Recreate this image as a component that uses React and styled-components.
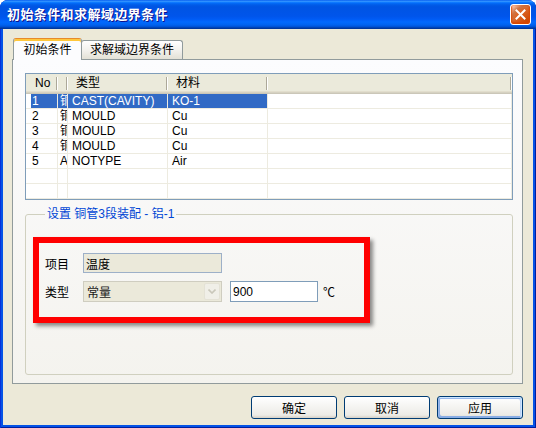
import React from 'react';
import styled, { createGlobalStyle, css } from 'styled-components';

const uiFont = `"Liberation Sans", "Noto Sans CJK SC", sans-serif`;

const GlobalStyle = createGlobalStyle`
	html, body {
		margin: 0;
		padding: 0;
	}
	body {
		width: 536px;
		height: 428px;
		overflow: hidden;
		font-family: ${uiFont};
		font-size: 12px;
		color: #000;
	}
`;

const Window = styled.div`
	width: 536px;
	height: 428px;
	box-sizing: border-box;
	display: flex;
	flex-direction: column;
	background: #0553e6;
	border-radius: 8px 8px 0 0;
	overflow: hidden;
	box-shadow: inset 1px 0 #0831d9, inset -1px -1px #001ea0;
`;

const TitleBar = styled.div`
	height: 29px;
	flex: none;
	display: flex;
	align-items: center;
	justify-content: space-between;
	padding: 0 5px 0 7px;
	background: linear-gradient(
		to bottom,
		#0058ee 0%,
		#3593ff 4%,
		#288eff 6%,
		#127dff 8%,
		#036ffc 10%,
		#0262ee 14%,
		#0057e5 20%,
		#0054e3 24%,
		#0055eb 56%,
		#005bf5 66%,
		#026afe 76%,
		#0062ef 86%,
		#0052d6 92%,
		#0040ab 96%,
		#003092 100%
	);
	& > h1 {
		margin: 0;
		font-size: 13px;
		font-weight: 700;
		letter-spacing: 0.4px;
		color: #fff;
		text-shadow: 1px 1px #0f1089;
		line-height: 16px;
		padding-top: 1px;
	}
`;

const CloseButton = styled.div`
	width: 21px;
	height: 21px;
	box-sizing: border-box;
	border: 1px solid #fff;
	border-radius: 3px;
	display: flex;
	align-items: center;
	justify-content: center;
	background: radial-gradient(circle at 90% 90%, #cc4600 0%, #dc6527 55%, #cd7546 70%, #ffccb2 90%, #fff 100%);
	box-shadow: inset 0 -1px 2px 1px #da4600;
`;

const Body = styled.div`
	flex: 1;
	margin: 0 3px 3px;
	background: #ece9d8;
	padding: 9px 10px 6px 9px;
	display: flex;
	flex-direction: column;
`;

const TabStrip = styled.div`
	height: 21px;
	flex: none;
	display: flex;
	align-items: flex-end;
	padding-left: 1px;
	position: relative;
	z-index: 1;
`;

const Tab = styled.div`
	box-sizing: border-box;
	width: ${p => p.$width}px;
	border: 1px solid #919b9c;
	border-bottom: none;
	border-radius: 3px 3px 0 0;
	text-align: center;
	font-size: 12px;
	${p =>
		p.$active
			? css`
					height: 22px;
					margin-bottom: -1px;
					background: #fcfcfe;
					border-top: 1px solid #e68b2c;
					box-shadow: inset 0 2px #ffc73c;
					line-height: 21px;
					padding-top: 1px;
			  `
			: css`
					height: 19px;
					margin-left: -1px;
					background: linear-gradient(to bottom, #fff 0%, #f3f2ee 50%, #e3e1d6 100%);
					line-height: 19px;
			  `}
`;

const TabPanel = styled.div`
	height: 325px;
	flex: none;
	box-sizing: border-box;
	border: 1px solid #919b9c;
	background: linear-gradient(to bottom, #fcfcfe 0%, #f4f3ee 100%);
	padding: 13px 9px 8px 12px;
	display: flex;
	flex-direction: column;
`;

const gridColumns = '32px 10px 100px 100px 1fr';

const ListView = styled.div`
	height: 127px;
	flex: none;
	box-sizing: border-box;
	border: 1px solid #7f9db9;
	background: #fff;
	overflow: hidden;
`;

const HeaderRow = styled.div`
	display: grid;
	grid-template-columns: ${gridColumns};
	height: 20px;
	background: #ebeadb;
	box-shadow: inset 0 -1px #cbc7b8, inset 0 -2px #d6d2c2, inset 0 -3px #e2decd;
`;

const HeaderCell = styled.div`
	line-height: 18px;
	padding-left: ${p => p.$pad}px;
	white-space: nowrap;
	overflow: hidden;
	background:
		linear-gradient(#aca899, #aca899) right 1px top 3px / 1px 13px no-repeat,
		linear-gradient(#fff, #fff) right 0 top 3px / 1px 13px no-repeat;
`;

const Row = styled.div`
	display: grid;
	grid-template-columns: ${gridColumns};
	height: 15px;
`;

const Cell = styled.div`
	box-sizing: border-box;
	height: 15px;
	line-height: 15px;
	padding-left: ${p => p.$pad}px;
	border-right: 1px solid #edebe0;
	border-bottom: 1px solid #edebe0;
	white-space: nowrap;
	overflow: hidden;
	${p =>
		p.$selected &&
		css`
			color: #fff;
			background: ${p.$inset ? `linear-gradient(to right, transparent ${p.$inset}px, #316ac5 ${p.$inset}px)` : '#316ac5'};
		`}
`;

const GroupBox = styled.fieldset`
	flex: 1;
	margin: 7px 0 0;
	min-width: 0;
	border: 1px solid #d0d0bf;
	border-radius: 3px;
	padding: 32px 0 0 19px;
	& > legend {
		color: #0046d5;
		font-size: 12px;
		line-height: 14px;
		padding: 0 2px;
		margin-left: 0;
	}
`;

const FieldArea = styled.div`
	position: relative;
	display: flex;
	flex-direction: column;
	gap: 8px;
`;

const FieldRow = styled.div`
	display: flex;
	align-items: center;
	height: ${p => p.$height}px;
`;

const FieldLabel = styled.span`
	width: 38px;
	flex: none;
`;

const TextBox = styled.input`
	box-sizing: border-box;
	width: ${p => p.$width}px;
	height: ${p => p.$height}px;
	margin: 0 0 0 ${p => p.$gap || 0}px;
	padding: 0 2px;
	border: 1px solid ${p => (p.$readOnlyLook ? '#9db0c8' : '#7f9db9')};
	background: ${p => (p.$readOnlyLook ? '#ebe9da' : '#fff')};
	font: 12px ${uiFont};
	color: #000;
	outline: none;
`;

const ComboBox = styled.div`
	box-sizing: border-box;
	width: 139px;
	height: 21px;
	border: 1px solid #cfcdc0;
	background: #ebe9da;
	display: flex;
	align-items: center;
	padding: 1px;
	& > span {
		flex: 1;
		padding-left: 2px;
		color: #1a1a1a;
	}
`;

const DropButton = styled.div`
	width: 16px;
	height: 17px;
	box-sizing: border-box;
	border: 1px solid #e4e2d6;
	border-radius: 2px;
	background: #f0efe8;
	display: flex;
	align-items: center;
	justify-content: center;
`;

const Unit = styled.span`
	margin-left: 5px;
	font-family: "Noto Sans CJK SC", sans-serif;
	font-size: 12px;
`;

const Highlight = styled.div`
	position: absolute;
	left: -12px;
	top: -16px;
	width: 337px;
	height: 86px;
	box-sizing: border-box;
	border: 6px solid #ff0000;
	box-shadow: 3px 3px 4px rgba(0, 0, 0, 0.45);
	pointer-events: none;
`;

const ButtonRow = styled.div`
	margin-top: 12px;
	height: 23px;
	flex: none;
	display: flex;
	justify-content: flex-end;
	gap: 7px;
`;

const Button = styled.button`
	width: 86px;
	height: 23px;
	box-sizing: border-box;
	padding: 0;
	border: 1px solid #003c74;
	border-radius: 3px;
	background: linear-gradient(180deg, #fff 0%, #ecebe6 86%, #d6d0c5 100%);
	font: 12px ${uiFont};
	color: #000;
	${p =>
		p.$default &&
		css`
			box-shadow: inset -1px 1px #cee7ff, inset 1px 2px #98b8ea, inset -2px 2px #bcd4f6, inset 1px -1px #89ade4,
				inset 2px -2px #89ade4;
		`}
`;

const rows = [
	{ no: '1', name: '铜管3段装配', type: 'CAST(CAVITY)', material: 'KO-1', selected: true },
	{ no: '2', name: '铜管3段装配', type: 'MOULD', material: 'Cu' },
	{ no: '3', name: '铜管3段装配', type: 'MOULD', material: 'Cu' },
	{ no: '4', name: '铜管3段装配', type: 'MOULD', material: 'Cu' },
	{ no: '5', name: 'Air', type: 'NOTYPE', material: 'Air' },
	{ no: '', name: '', type: '', material: '' },
	{ no: '', name: '', type: '', material: '' },
];

const App = () => {
	return (
		<>
			<GlobalStyle />
			<Window>
				<TitleBar>
					<h1>初始条件和求解域边界条件</h1>
					<CloseButton>
						<svg width="11" height="11" viewBox="0 0 11 11">
							<path d="M1.5 1.5 L9.5 9.5 M9.5 1.5 L1.5 9.5" stroke="#fff" strokeWidth="2" strokeLinecap="square" />
						</svg>
					</CloseButton>
				</TitleBar>
				<Body>
					<TabStrip>
						<Tab $active $width={69}>
							初始条件
						</Tab>
						<Tab $width={102}>求解域边界条件</Tab>
					</TabStrip>
					<TabPanel>
						<ListView>
							<HeaderRow>
								<HeaderCell $pad={9}>No</HeaderCell>
								<HeaderCell $pad={0} />
								<HeaderCell $pad={8}>类型</HeaderCell>
								<HeaderCell $pad={8}>材料</HeaderCell>
								<HeaderCell $pad={0} />
							</HeaderRow>
							{rows.map((row, i) => (
								<Row key={i}>
									<Cell $pad={6} $selected={row.selected} $inset={5}>
										{row.no}
									</Cell>
									<Cell $pad={2} $selected={row.selected}>
										{row.name}
									</Cell>
									<Cell $pad={4} $selected={row.selected}>
										{row.type}
									</Cell>
									<Cell $pad={4} $selected={row.selected}>
										{row.material}
									</Cell>
									<Cell $pad={0} />
								</Row>
							))}
						</ListView>
						<GroupBox>
							<legend>设置 铜管3段装配 - 铝-1</legend>
							<FieldArea>
								<FieldRow $height={20}>
									<FieldLabel>项目</FieldLabel>
									<TextBox $readOnlyLook $width={139} $height={20} readOnly value="温度" />
								</FieldRow>
								<FieldRow $height={21}>
									<FieldLabel>类型</FieldLabel>
									<ComboBox>
										<span>常量</span>
										<DropButton>
											<svg width="8" height="5" viewBox="0 0 8 5">
												<path d="M0.5 0.5 L4 4 L7.5 0.5" fill="none" stroke="#c9c7ba" strokeWidth="1.6" />
											</svg>
										</DropButton>
									</ComboBox>
									<TextBox $width={88} $height={21} $gap={8} readOnly value="900" />
									<Unit>℃</Unit>
								</FieldRow>
								<Highlight />
							</FieldArea>
						</GroupBox>
					</TabPanel>
					<ButtonRow>
						<Button>确定</Button>
						<Button>取消</Button>
						<Button $default>应用</Button>
					</ButtonRow>
				</Body>
			</Window>
		</>
	);
};

export default App;
